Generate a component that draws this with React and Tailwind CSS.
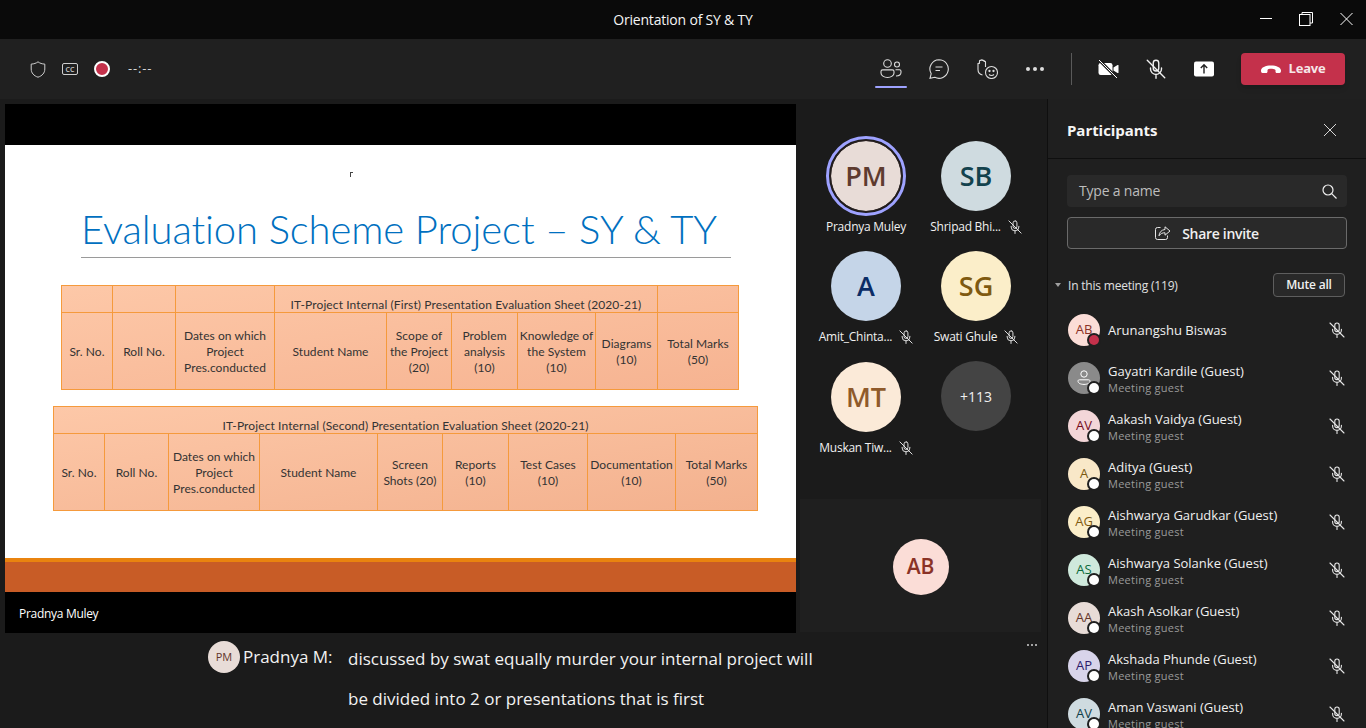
import React from 'react';

const ui = { fontFamily: '"Open Sans", "Noto Sans", sans-serif' };

const MicOff = ({ size = 16, color = '#e6e6e6' }) => (
  <svg width={size} height={size} viewBox="0 0 16 16" fill="none" stroke={color} strokeWidth="1.1" strokeLinecap="round">
    <rect x="5.8" y="1" width="4.4" height="8.6" rx="2.2" />
    <path d="M3.6 7.2v.8a4.4 4.4 0 0 0 8.8 0v-.8M8 12.4v3" />
    <path d="M1 1l14 14" strokeWidth="1.1" />
  </svg>
);

const Avatar = ({ text, bg, fg, status }) => (
  <div className={`relative w-8 h-8 rounded-full flex items-center justify-center shrink-0 text-[13px] ${bg} ${fg}`}>
    {text}
    <span className="absolute -right-[1px] -bottom-[1px] w-3.5 h-3.5 rounded-full bg-[#1f1f1f] flex items-center justify-center">
      <span className={`w-2.5 h-2.5 rounded-full ${status === 'busy' ? 'bg-[#c4314b]' : 'bg-white'}`} />
    </span>
  </div>
);

const GuestIcon = () => (
  <svg width="18" height="18" viewBox="0 0 18 18" fill="none" stroke="#fff" strokeWidth="1">
    <circle cx="9" cy="5" r="3.2" />
    <path d="M3 12.2c0-1 .6-1.4 1.4-1.4h9.2c.8 0 1.4.4 1.4 1.4 0 2-2.6 3.2-6 3.2s-6-1.2-6-3.2z" />
  </svg>
);

const participants = [
  { name: 'Gayatri Kardile (Guest)', icon: true, bg: 'bg-[#8a8a8a]', fg: 'text-white' },
  { name: 'Aakash Vaidya (Guest)', text: 'AV', bg: 'bg-[#f3d6d8]', fg: 'text-[#750b1c]' },
  { name: 'Aditya (Guest)', text: 'A', bg: 'bg-[#f9e8c8]', fg: 'text-[#7a5a10]' },
  { name: 'Aishwarya Garudkar (Guest)', text: 'AG', bg: 'bg-[#fbeec9]', fg: 'text-[#7f5a10]' },
  { name: 'Aishwarya Solanke (Guest)', text: 'AS', bg: 'bg-[#cfe9dc]', fg: 'text-[#0b6a3b]' },
  { name: 'Akash Asolkar (Guest)', text: 'AA', bg: 'bg-[#e8dcd7]', fg: 'text-[#63352a]' },
  { name: 'Akshada Phunde (Guest)', text: 'AP', bg: 'bg-[#d8d4ea]', fg: 'text-[#2d1a6a]' },
  { name: 'Aman Vaswani (Guest)', text: 'AV', bg: 'bg-[#cfdbe0]', fg: 'text-[#10404a]' },
];

const Tile = ({ text, bg, fg, name, muted, ring, small, low }) => (
  <div className={`h-[110px] flex flex-col items-center ${low ? 'mt-px' : ''}`}>
    <div className={`relative w-[70px] h-[70px] rounded-full flex items-center justify-center ${small ? 'text-[14px]' : 'text-[27px] font-semibold'} ${bg} ${fg}`}>
      {ring && <span className="absolute -inset-[5px] rounded-full border-[3px] border-[#9ea2ff]" />}
      {ring && <span className="absolute -inset-[1px] rounded-full border border-[#2a2020]" />}
      {text}
    </div>
    <div className="mt-[8px] h-4 flex items-center gap-[7px] text-[12px] leading-4 text-[#f0f0f0] tracking-[-0.25px] whitespace-nowrap">
      <span>{name}</span>
      {muted && <MicOff size={14} />}
    </div>
  </div>
);

const cell = 'flex items-center justify-center text-center border-r border-[#f59a3c] last:border-r-0 pt-[2px] whitespace-pre-line';

const TableOne = () => {
  const cols = 'grid-cols-[51px_63px_99px_112px_65px_66px_78px_62px_1fr]';
  return (
    <div className="ml-[56px] w-[678px] h-[105px] border border-[#f59a3c] bg-gradient-to-br from-[#fdc8a8] to-[#f6b391] text-[12px] leading-4 tracking-[0.05px] text-[#333333]">
      <div className={`grid ${cols} h-[27px] border-b border-[#f59a3c]`}>
        <div className={cell} />
        <div className={cell} />
        <div className={cell} />
        <div className={`${cell} col-span-5 !items-end leading-[14px] tracking-[0.1px] whitespace-nowrap`}>IT-Project Internal (First) Presentation Evaluation Sheet (2020-21)</div>
        <div className={cell} />
      </div>
      <div className={`grid ${cols} h-[76px]`}>
        {['Sr. No.', 'Roll No.', 'Dates on which\nProject\nPres.conducted', 'Student Name', 'Scope of\nthe Project\n(20)', 'Problem\nanalysis\n(10)', 'Knowledge of\nthe System\n(10)', 'Diagrams\n(10)', 'Total Marks\n(50)'].map((t) => (
          <div key={t} className={cell}>{t}</div>
        ))}
      </div>
    </div>
  );
};

const TableTwo = () => {
  const cols = 'grid-cols-[51px_64px_91px_118px_65px_66px_79px_88px_1fr]';
  return (
    <div className="ml-[48px] w-[705px] h-[105px] mt-[16px] border border-[#f59a3c] bg-gradient-to-br from-[#fdc8a8] to-[#f3b18e] text-[12px] leading-4 tracking-[0.05px] text-[#333333]">
      <div className="h-[27px] border-b border-[#f59a3c] flex items-end justify-center leading-[14px] tracking-[0.1px]">IT-Project Internal (Second) Presentation Evaluation Sheet (2020-21)</div>
      <div className={`grid ${cols} h-[76px]`}>
        {['Sr. No.', 'Roll No.', 'Dates on which\nProject\nPres.conducted', 'Student Name', 'Screen\nShots (20)', 'Reports\n(10)', 'Test Cases\n(10)', 'Documentation\n(10)', 'Total Marks\n(50)'].map((t) => (
          <div key={t} className={cell}>{t}</div>
        ))}
      </div>
    </div>
  );
};

export default function App() {
  return (
    <div className="w-[1366px] h-[728px] overflow-hidden bg-[#1b1b1b] text-white flex flex-col" style={ui}>
      {/* title bar */}
      <div className="h-[39px] shrink-0 bg-[#0a0a0a] flex items-center relative">
        <div className="flex-1 text-center text-[14px] tracking-[-0.2px] text-[#f5f5f5]">Orientation of SY &amp; TY</div>
        <div className="absolute right-[13px] top-[12px] flex items-start gap-[27px]">
          <svg width="12" height="14" viewBox="0 0 12 14" stroke="#fff" fill="none"><path d="M0 6.5h12" /></svg>
          <svg width="14" height="14" viewBox="0 0 14 14" stroke="#fff" fill="none"><rect x="0.5" y="2.5" width="10.5" height="11" /><path d="M3 2.5V.5h10.5v10.500H11" /></svg>
          <svg width="13" height="14" viewBox="0 0 13 14" stroke="#fff" fill="none"><path d="M.5 1l12 12M12.500 1L.5 13" /></svg>
        </div>
      </div>

      {/* toolbar */}
      <div className="h-[60px] shrink-0 bg-[#202020] flex items-center pl-[30px] pr-[21px]">
        <div className="flex items-center gap-[16px]">
          <svg width="16" height="17" viewBox="0 0 16 17" fill="none" stroke="#cfcfcf"><path d="M8 .8c1.800 1.400 4 2.200 6.800 2.300V8c0 4-2.600 6.800-6.800 8.200C3.800 14.800 1.200 12 1.200 8V3.100C4 3 6.200 2.200 8 .8z" /></svg>
          <div className="w-4 h-3 border border-[#cfcfcf] rounded-[2px] flex items-center justify-center text-[7px] font-semibold leading-none text-[#cfcfcf]">CC</div>
          <div className="w-4 h-4 rounded-full border-2 border-white bg-[#c4314b]" />
        </div>
        <div className="ml-[18px] text-[13px] text-[#d6d6d6] tracking-[0.8px]">--:--</div>

        <div className="ml-auto flex items-center">
          <div className="relative w-12 h-8 flex items-center justify-center">
            <svg width="22" height="20" viewBox="0 0 22 20" fill="none" stroke="#dcdcdc" strokeWidth="1.1"><circle cx="7.500" cy="4.500" r="3.800" /><circle cx="17" cy="5.500" r="2.500" /><path d="M1 12.500c0-.9.700-1.600 1.600-1.600h9.800c.9 0 1.600.7 1.600 1.600v1.500c0 2.400-2.800 4.500-6.500 4.500S1 16.400 1 14z" /><path d="M15.500 10.800h4c.8 0 1.500.7 1.500 1.500v1c0 2.200-2 3.700-5 3.700" /></svg>
            <span className="absolute left-2 right-2 -bottom-[3px] h-[2px] rounded-sm bg-[#9ea2ff]" />
          </div>
          <div className="w-12 h-8 flex items-center justify-center">
            <svg width="20" height="20" viewBox="0 0 20 20" fill="none" stroke="#dcdcdc" strokeWidth="1.1"><path d="M10 .7a9.300 9.300 0 1 1-4.200 17.600L1 19.300l1.200-4.600A9.300 9.300 0 0 1 10 .7z" /><path d="M6.500 8h7M6.500 11.500h4.500" /></svg>
          </div>
          <div className="w-12 h-8 flex items-center justify-center">
            <svg width="22" height="20" viewBox="0 0 22 20" fill="none" stroke="#dcdcdc" strokeWidth="1.1"><path d="M2 4v6.500c0 3 2 5 4.500 5.500M2 5c0-1 1.500-1 1.500 0M3.500 4V2c0-1 1.500-1 1.500 0M5 2V1.500c0-1 1.600-1 1.600 0M6.600 2c0-1 1.500-1 1.500 0v1M8.100 3c0-1 1.400-1 1.400 0v5" /><circle cx="15.500" cy="13.500" r="6" /><circle cx="13.500" cy="12" r=".6" fill="#dcdcdc" /><circle cx="17.500" cy="12" r=".6" fill="#dcdcdc" /><path d="M13 15.500c1.300 1.200 3.700 1.200 5 0" /></svg>
          </div>
          <div className="w-12 h-8 flex items-center justify-center gap-[3px]">
            <span className="w-1 h-1 rounded-full bg-[#dcdcdc]" />
            <span className="w-1 h-1 rounded-full bg-[#dcdcdc]" />
            <span className="w-1 h-1 rounded-full bg-[#dcdcdc]" />
          </div>
          <div className="w-px h-8 bg-[#5a5a5a] mx-[12px]" />
          <div className="w-12 h-8 flex items-center justify-center">
            <svg width="21" height="20" viewBox="0 0 21 20"><rect x="0.500" y="4" width="14" height="12" rx="2.200" fill="#fff" /><path d="M15.500 8.500l4-2.500c.5-.3 1 .1 1 .6v6.800c0 .5-.5.9-1 .6l-4-2.500z" fill="#fff" /><path d="M1 1l18 18" stroke="#202020" strokeWidth="3" /><path d="M1 1l18 18" stroke="#fff" strokeWidth="1" /></svg>
          </div>
          <div className="w-12 h-8 flex items-center justify-center">
            <MicOff size={20} color="#f2f2f2" />
          </div>
          <div className="w-12 h-8 flex items-center justify-center">
            <svg width="20" height="16" viewBox="0 0 20 16"><rect width="20" height="15" y="0.500" rx="2" fill="#fff" /><path d="M10 12.500V4M6.800 7L10 3.800 13.200 7" stroke="#202020" strokeWidth="1.400" fill="none" /></svg>
          </div>
          <button className="ml-[13px] w-[104px] h-8 rounded-[4px] bg-[#c4314b] flex items-center justify-center gap-[8px] text-[13px] font-bold tracking-[-0.2px] text-[#f6e6e8] shadow-md">
            <svg width="20" height="9" viewBox="0 0 20 9"><path d="M0 5.500C0 2.500 4.500.5 10 .5s10 2 10 5c0 1.500-.3 2.500-1.500 2.500h-2.600c-1 0-1.400-.6-1.400-1.500V5C13 4 11.500 3.800 10 3.800S7 4 6.500 5v1.500C6.500 7.400 6.100 8 5.100 8H1.500C.3 8 0 7 0 5.500z" fill="#fff" /></svg>
            Leave
          </button>
        </div>
      </div>

      <div className="flex-1 flex min-h-0">
        {/* stage */}
        <div className="w-[1047px] shrink-0 flex flex-col bg-[#1b1b1b]">
          <div className="h-[534px] shrink-0 flex pt-[5px] pl-[5px]">
            <div className="w-[791px] h-[529px] bg-black flex flex-col shrink-0">
              <div className="h-[41px] shrink-0" />
              <div className="h-[413px] shrink-0 bg-white relative" style={{ fontFamily: 'Lato, "Open Sans", sans-serif' }}>
                <span className="absolute left-[345px] top-[27px] w-[3px] h-[5px] border-l border-t border-[#444]" />
                <div className="h-[113px] mx-[76px] w-[650px] border-b border-[#9a9a9a] flex items-end">
                  <h1 className="text-[40px] leading-[56px] font-light text-[#0070c0] whitespace-nowrap tracking-[-0.1px]">Evaluation Scheme Project – SY &amp; TY</h1>
                </div>
                <div className="mt-[27px]">
                  <TableOne />
                  <TableTwo />
                </div>
              </div>
              <div className="h-1 shrink-0 bg-[#e9830f]" />
              <div className="h-[30px] shrink-0 bg-[#c85c26]" />
              <div className="flex-1 flex items-center pl-[14px] pt-[2px] text-[12px] tracking-[-0.3px] text-white">Pradnya Muley</div>
            </div>

            {/* video tiles */}
            <div className="w-[245px] shrink-0 flex flex-col pl-[15px] pt-[37px] pr-[6px]">
              <div className="grid grid-cols-[110px_110px]">
                <Tile text="PM" bg="bg-[#e8dcd7]" fg="text-[#5e3b2f]" name="Pradnya Muley" ring />
                <Tile text="SB" bg="bg-[#cfdbe0]" fg="text-[#13424d]" name="Shripad Bhi..." muted />
                <Tile text="A" bg="bg-[#c5d5e8]" fg="text-[#0b2c66]" name="Amit_Chinta..." muted />
                <Tile text="SG" bg="bg-[#fbeec9]" fg="text-[#7f5a10]" name="Swati Ghule" muted />
                <Tile text="MT" bg="bg-[#fbead8]" fg="text-[#8f5a2a]" name="Muskan Tiw..." muted low />
                <Tile text="+113" bg="bg-[#444444]" fg="text-[#f0f0f0]" name="" small />
              </div>
              <div className="mt-[27px] -ml-[11px] w-[241px] h-[133px] bg-[#1f1f1f] flex items-center justify-center pt-[2px]">
                <div className="w-14 h-14 rounded-full bg-[#fbddd7] text-[#8a3226] text-[21px] font-semibold flex items-center justify-center">AB</div>
              </div>
            </div>
          </div>

          {/* captions */}
          <div className="flex-1 relative pl-[208px] pt-[8px] flex items-start">
            <div className="w-8 h-8 rounded-full bg-[#e8dcd7] text-[#63352a] text-[11px] flex items-center justify-center shrink-0">PM</div>
            <div className="ml-[3px] w-[105px] mt-[6px] text-[17px] leading-[20px] text-[#f2f2f2] shrink-0">Pradnya M:</div>
            <div className="text-[17px] leading-[40px] mt-[-2px] text-[#f2f2f2] w-[500px]">
              <div>discussed by swat equally murder your internal project will</div>
              <div>be divided into 2 or presentations that is first</div>
            </div>
            <div className="absolute right-[10px] top-[11px] flex gap-[2px]">
              <span className="w-[2px] h-[2px] rounded-full bg-[#d0d0d0]" />
              <span className="w-[2px] h-[2px] rounded-full bg-[#d0d0d0]" />
              <span className="w-[2px] h-[2px] rounded-full bg-[#d0d0d0]" />
            </div>
          </div>
        </div>

        {/* participants */}
        <aside className="w-[319px] shrink-0 bg-[#1f1f1f] border-l border-[#0f0f0f] overflow-hidden">
          <div className="h-[60px] flex items-center justify-between pl-[19px] pr-[29px] pt-[3px] border-b border-[#0f0f0f]">
            <h2 className="text-[15px] font-bold text-[#f5f5f5] tracking-[-0.05px]">Participants</h2>
            <svg width="14" height="14" viewBox="0 0 14 14" stroke="#d6d6d6" fill="none"><path d="M1 1l12 12M13 1L1 13" /></svg>
          </div>
          <div className="px-[19px] pt-[16px]">
            <div className="h-8 rounded-[4px] bg-[#292929] flex items-center justify-between pl-3 pr-[10px] text-[14px] tracking-[-0.2px] text-[#bdbdbd]">
              <span className="-translate-y-px">Type a name</span>
              <svg width="15" height="15" viewBox="0 0 15 15" fill="none" stroke="#f0f0f0" strokeWidth="1.200"><circle cx="6" cy="6" r="5" /><path d="M9.700 9.700l4.800 4.800" /></svg>
            </div>
            <button className="mt-[10px] w-full h-8 rounded-[4px] border border-[#6a6a6a] bg-[#292929] flex items-center justify-center gap-[11px] text-[14px] tracking-[-0.3px] font-semibold text-[#f0f0f0]">
              <svg width="16" height="14" viewBox="0 0 16 14" fill="none" stroke="#e6e6e6"><path d="M5.500 1.500H2.500a2 2 0 0 0-2 2v8a2 2 0 0 0 2 2h8a2 2 0 0 0 2-2v-2" /><path d="M10 .8l5 4.200-5 4.200V6.800C7.500 6.700 5.500 7.500 4 9.800c.2-3.400 2.500-6 6-6.300z" /></svg>
              Share invite
            </button>
          </div>
          <div className="relative mt-[24px] h-6 flex items-center justify-between pl-[20px] pr-[21px]">
            <span className="absolute left-[7px] top-[10px] w-0 h-0 border-x-[3px] border-x-transparent border-t-[4px] border-t-[#a0a0a0]" />
            <span className="text-[12px] tracking-[-0.2px] text-[#e0e0e0] translate-y-px">In this meeting (119)</span>
            <button className="w-[72px] h-6 rounded-[4px] border border-[#5e5e5e] bg-[#292929] text-[12px] tracking-[-0.2px] font-semibold text-[#f0f0f0]">Mute all</button>
          </div>
          <div className="mt-[9px]">
            <div className="h-[48px] flex items-center pl-[20px] pr-[21px]">
              <Avatar text="AB" bg="bg-[#fbddd7]" fg="text-[#8a3226]" status="busy" />
              <div className="ml-2 flex-1 text-[13px] text-[#f0f0f0] translate-y-px">Arunangshu Biswas</div>
              <MicOff />
            </div>
            {participants.map((p) => (
              <div key={p.name} className="h-[48px] flex items-center pl-[20px] pr-[21px]">
                <Avatar text={p.icon ? <GuestIcon /> : p.text} bg={p.bg} fg={p.fg} />
                <div className="ml-2 flex-1 min-w-0 translate-y-px">
                  <div className="text-[13px] leading-[17px] text-[#f0f0f0] whitespace-nowrap">{p.name}</div>
                  <div className="text-[11px] leading-[15px] tracking-[0.25px] text-[#9a9a9a]">Meeting guest</div>
                </div>
                <MicOff />
              </div>
            ))}
          </div>
        </aside>
      </div>
    </div>
  );
}
